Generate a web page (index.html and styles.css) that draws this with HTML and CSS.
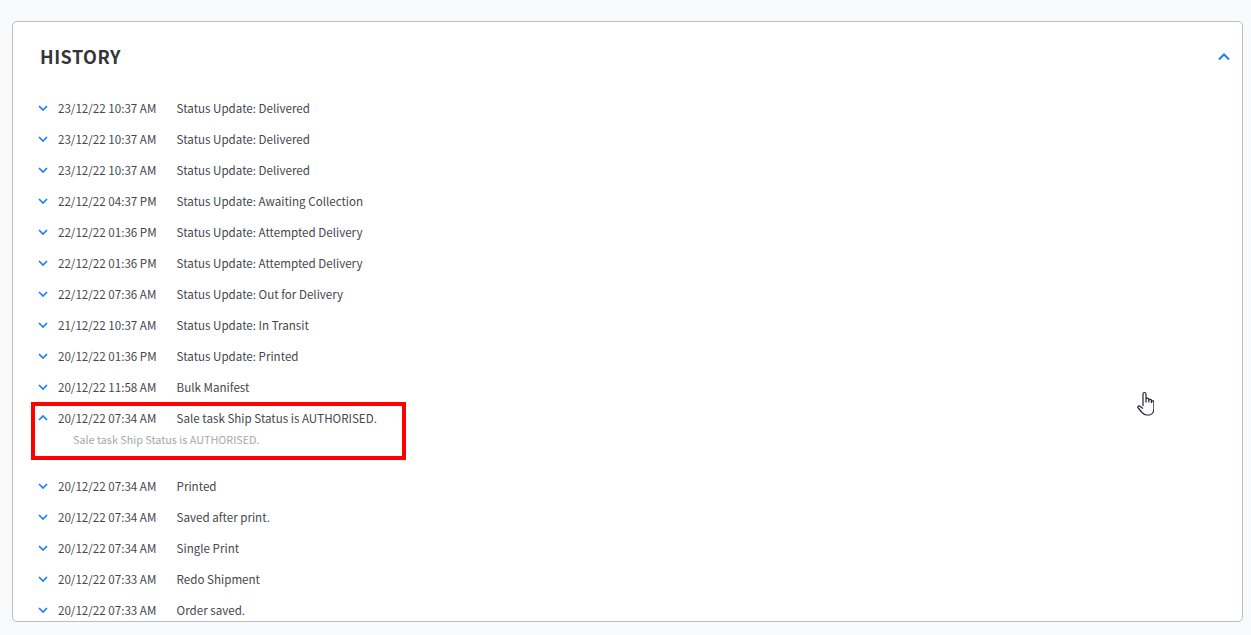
FILE: index.html
```html
<!DOCTYPE html>
<html lang="en">
<head>
<meta charset="utf-8">
<title>History</title>
<link rel="stylesheet" href="styles.css">
</head>
<body>
<section class="card">
  <header class="card-head">
    <h2 class="title">HISTORY</h2>
    <svg class="chev-lg" viewBox="0 0 12 8"><path d="M1 6.500 6 1.500l5 5"/></svg>
  </header>
  <ul class="list">
    <li class="row"><svg class="chev" viewBox="0 0 10 6"><path d="M1 1l4 4 4-4"/></svg><span class="date">23/12/22 10:37 AM</span><span class="msg">Status Update: Delivered</span></li>
    <li class="row"><svg class="chev" viewBox="0 0 10 6"><path d="M1 1l4 4 4-4"/></svg><span class="date">23/12/22 10:37 AM</span><span class="msg">Status Update: Delivered</span></li>
    <li class="row"><svg class="chev" viewBox="0 0 10 6"><path d="M1 1l4 4 4-4"/></svg><span class="date">23/12/22 10:37 AM</span><span class="msg">Status Update: Delivered</span></li>
    <li class="row"><svg class="chev" viewBox="0 0 10 6"><path d="M1 1l4 4 4-4"/></svg><span class="date">22/12/22 04:37 PM</span><span class="msg">Status Update: Awaiting Collection</span></li>
    <li class="row"><svg class="chev" viewBox="0 0 10 6"><path d="M1 1l4 4 4-4"/></svg><span class="date">22/12/22 01:36 PM</span><span class="msg">Status Update: Attempted Delivery</span></li>
    <li class="row"><svg class="chev" viewBox="0 0 10 6"><path d="M1 1l4 4 4-4"/></svg><span class="date">22/12/22 01:36 PM</span><span class="msg">Status Update: Attempted Delivery</span></li>
    <li class="row"><svg class="chev" viewBox="0 0 10 6"><path d="M1 1l4 4 4-4"/></svg><span class="date">22/12/22 07:36 AM</span><span class="msg">Status Update: Out for Delivery</span></li>
    <li class="row"><svg class="chev" viewBox="0 0 10 6"><path d="M1 1l4 4 4-4"/></svg><span class="date">21/12/22 10:37 AM</span><span class="msg">Status Update: In Transit</span></li>
    <li class="row"><svg class="chev" viewBox="0 0 10 6"><path d="M1 1l4 4 4-4"/></svg><span class="date">20/12/22 01:36 PM</span><span class="msg">Status Update: Printed</span></li>
    <li class="row"><svg class="chev" viewBox="0 0 10 6"><path d="M1 1l4 4 4-4"/></svg><span class="date">20/12/22 11:58 AM</span><span class="msg">Bulk Manifest</span></li>
    <li class="expanded">
      <div class="row"><svg class="chev" viewBox="0 0 10 6"><path d="M1 5l4-4 4 4"/></svg><span class="date">20/12/22 07:34 AM</span><span class="msg">Sale task Ship Status is AUTHORISED.</span></div>
      <p class="detail">Sale task Ship Status is AUTHORISED.</p>
      <div class="highlight"></div>
    </li>
    <li class="row"><svg class="chev" viewBox="0 0 10 6"><path d="M1 1l4 4 4-4"/></svg><span class="date">20/12/22 07:34 AM</span><span class="msg">Printed</span></li>
    <li class="row"><svg class="chev" viewBox="0 0 10 6"><path d="M1 1l4 4 4-4"/></svg><span class="date">20/12/22 07:34 AM</span><span class="msg">Saved after print.</span></li>
    <li class="row"><svg class="chev" viewBox="0 0 10 6"><path d="M1 1l4 4 4-4"/></svg><span class="date">20/12/22 07:34 AM</span><span class="msg">Single Print</span></li>
    <li class="row"><svg class="chev" viewBox="0 0 10 6"><path d="M1 1l4 4 4-4"/></svg><span class="date">20/12/22 07:33 AM</span><span class="msg">Redo Shipment</span></li>
    <li class="row"><svg class="chev" viewBox="0 0 10 6"><path d="M1 1l4 4 4-4"/></svg><span class="date">20/12/22 07:33 AM</span><span class="msg">Order saved.</span></li>
  </ul>
  <svg class="cursor" viewBox="0 0 17 25"><path d="M6 15V3a1.500 1.500 0 0 1 3 0v8.500V8.500a1.400 1.400 0 0 1 2.800 0v3-2a1.400 1.400 0 0 1 2.700 0v2.500-1a1.200 1.200 0 0 1 2.400 0V18c0 3.500-2 5.500-4.500 6H9.500C7.500 24 6.500 23 5 21.500L1.200 17c-1-1.200.5-2.800 1.800-1.800L6 17.500"/></svg>
</section>
</body>
</html>
```
FILE: styles.css
```css
* { box-sizing: border-box; }
html, body { margin: 0; height: 100%; }
body {
  background: #f9fafc;
  padding: 21px 8px 13px 12px;
  font-family: "Noto Sans CJK SC", "Noto Sans", sans-serif;
  font-size: 11.6px;
  color: #45474d;
  overflow: hidden;
}
.card {
  position: relative;
  height: 601px;
  background: #fff;
  border: 1px solid #bdbdbd;
  border-radius: 5px;
  overflow: hidden;
}
.card-head {
  display: flex;
  justify-content: space-between;
  align-items: center;
  height: 70px;
  padding: 0 12px 2px 27px;
}
.title {
  margin: 0;
  font-size: 18px;
  font-weight: 700;
  letter-spacing: 0.5px;
  line-height: 24px;
  color: #333539;
}
.chev-lg { width: 12px; height: 8px; margin-top: 2px; fill: none; stroke: #1a7cff; stroke-width: 2; }
.list { list-style: none; margin: 0; padding: 0 0 0 25px; }
.row { display: flex; align-items: center; height: 31px; padding-top: 1px; }
.chev { width: 10px; height: 6px; margin-right: 10px; margin-top: -1px; fill: none; stroke: #1a7cff; stroke-width: 1.7; flex: none; }
.date { width: 118.6px; flex: none; }
.msg { flex: none; }
.expanded { position: relative; height: 68px; }
.detail { margin: 0; padding-left: 35px; font-size: 10.8px; line-height: 13px; color: #a6a8ab; }
.highlight {
  position: absolute;
  left: -7px;
  top: 0;
  width: 375px;
  height: 58px;
  border: 4px solid #ff0000;
}
.cursor {
  position: absolute;
  left: 1124px;
  top: 369px;
  width: 17px;
  height: 25px;
  fill: #fff;
  stroke: #23232f;
  stroke-width: 1.2;
}
```
